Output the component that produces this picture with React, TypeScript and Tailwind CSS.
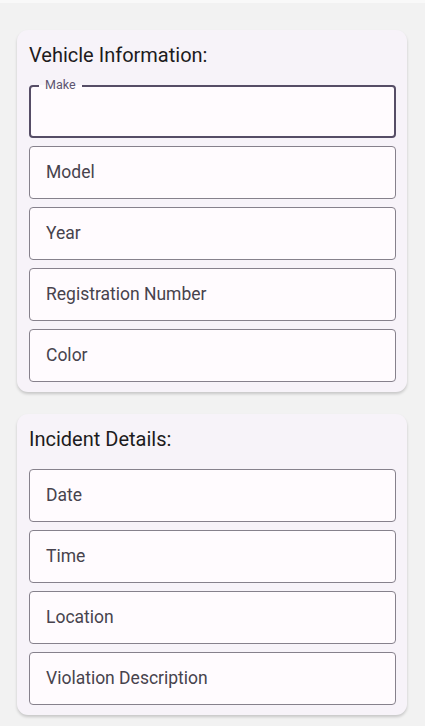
import React from "react";

const vehicleFields = ["Model", "Year", "Registration Number", "Color"];
const incidentFields = ["Date", "Time", "Location", "Violation Description"];

const Field: React.FC<{ label: string }> = ({ label }) => (
  <div className="h-[53px] rounded-[4px] border border-[#86818c] bg-[#fffbfe] flex items-center px-4 text-[17.5px] text-[#47434d]">
    {label}
  </div>
);

const FocusedField: React.FC<{ label: string }> = ({ label }) => (
  <div className="relative">
    <div className="h-[53px] rounded-[4px] border-2 border-[#564d66] bg-[#fffbfe]"></div>
    <span className="absolute left-[10px] top-[-8px] px-[6px] text-[12.5px] leading-[15px] text-[#5d5570] bg-[linear-gradient(to_bottom,#f7f3f9_50%,#fffbfe_50%)]">
      {label}
    </span>
  </div>
);

const Card: React.FC<{ title: string; children: React.ReactNode }> = ({
  title,
  children,
}) => (
  <div className="rounded-[11px] bg-[#f7f3f9] shadow-[0_2px_3px_rgba(0,0,0,0.18)] pl-3 pr-[11px] pb-[10px] pt-[11px]">
    <h2 className="text-[20px] leading-[28px] text-[#1d1b20] mb-[16px]">
      {title}
    </h2>
    <div className="flex flex-col gap-2">{children}</div>
  </div>
);

export default function App() {
  return (
    <div
      className="min-h-[726px] bg-[#f2f2f2] border-t-[3px] border-[#f9f9f9]"
      style={{ fontFamily: "Roboto, 'Noto Sans', sans-serif" }}
    >
      <div className="flex flex-col gap-[22px] pl-[17px] pr-[18px] pt-[27px] pb-3">
        <Card title="Vehicle Information:">
          <FocusedField label="Make" />
          {vehicleFields.map((f) => (
            <Field key={f} label={f} />
          ))}
        </Card>
        <Card title="Incident Details:">
          {incidentFields.map((f) => (
            <Field key={f} label={f} />
          ))}
        </Card>
      </div>
    </div>
  );
}
